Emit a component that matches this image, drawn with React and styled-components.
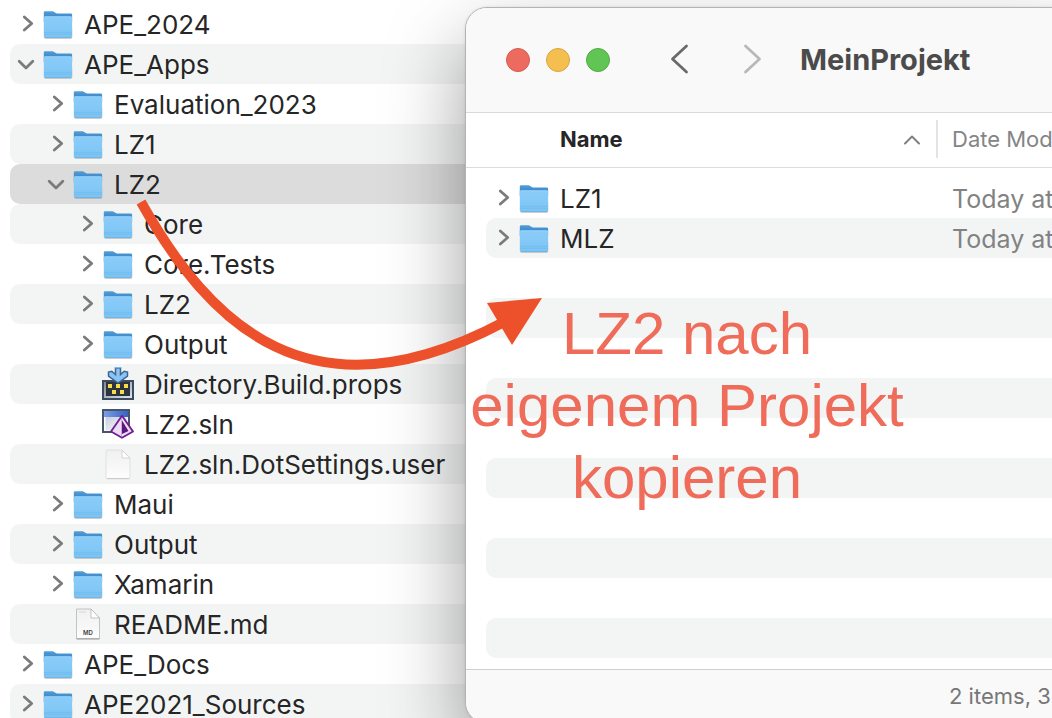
import React from "react";
import styled, { createGlobalStyle } from "styled-components";

const GlobalStyle = createGlobalStyle`
  * { box-sizing: border-box; }
  body {
    margin: 0;
    background: #ffffff;
    color: #262626;
    font-family: Inter, "Liberation Sans", sans-serif;
  }
`;

const Desktop = styled.main`
  position: relative;
  height: 100vh;
  overflow: hidden;
`;

const Tree = styled.ul`
  margin: 0;
  padding: 4px 0 0 10px;
  list-style: none;
`;

const Row = styled.li`
  display: flex;
  align-items: center;
  height: 40px;
  padding-left: ${(p) => 4 + p.$depth * 30}px;
  border-radius: 10px;
  background: ${(p) => (p.$selected ? "#dcdcdc" : p.$striped ? "#f3f5f5" : "transparent")};
`;

const Toggle = styled.button`
  display: flex;
  justify-content: center;
  flex: none;
  width: 28px;
  padding: 0;
  border: 0;
  background: none;
  color: #7b7b7b;
`;

const ToggleSpace = styled.span`
  flex: none;
  width: 28px;
`;

const FileName = styled.span`
  padding: 2px 0 0 10px;
  font-size: 26px;
  font-weight: 400;
  line-height: 30px;
  white-space: nowrap;
`;

const Icon = styled.svg`
  display: block;
  flex: none;
  overflow: visible;
`;

const Window = styled.section`
  position: absolute;
  top: 7px;
  left: 465px;
  right: -40px;
  border: 1px solid #b4b4b4;
  border-radius: 22px;
  background: #ffffff;
  box-shadow: 0 36px 80px rgba(0, 0, 0, 0.38), 0 0 3px rgba(0, 0, 0, 0.1);
`;

const TitleBar = styled.header`
  display: flex;
  align-items: center;
  height: 105px;
  padding-left: 40px;
  border-bottom: 1px solid #d9d9d9;
  border-radius: 21px 21px 0 0;
  background: #f9f9f9;
`;

const Lights = styled.div`
  display: flex;
  gap: 16px;
`;

const Light = styled.button`
  width: 24px;
  height: 24px;
  padding: 0;
  border: 1px solid ${(p) => p.$edge};
  border-radius: 50%;
  background: ${(p) => p.$fill};
`;

const Navigation = styled.nav`
  display: flex;
  gap: 40px;
  padding: 0 30px 2px 56px;
`;

const NavButton = styled.button`
  display: flex;
  padding: 0;
  border: 0;
  background: none;
  color: ${(p) => (p.disabled ? "#b8b8b8" : "#6a6a6a")};
`;

const Title = styled.h1`
  margin: 0;
  color: #4b4b4b;
  font-size: 29px;
  font-weight: 700;
  line-height: 36px;
`;

const FileTable = styled.table`
  display: block;
`;

const TableHead = styled.thead`
  display: block;
  border-bottom: 1px solid #dcdcdc;
`;

const TableBody = styled.tbody`
  display: block;
  padding: 10px 0 11px;
`;

const TableRow = styled.tr`
  display: flex;
  align-items: center;
  height: ${(p) => (p.$head ? 54 : 40)}px;
  margin-left: 20px;
  padding-bottom: ${(p) => (p.$head ? 2 : 0)}px;
  border-radius: 10px;
  background: ${(p) => (p.$striped ? "#f3f5f5" : "transparent")};
`;

const NameHeading = styled.th`
  display: flex;
  align-items: center;
  justify-content: space-between;
  flex: none;
  width: 452px;
  height: 38px;
  padding: 0 16px 0 74px;
  border-right: 2px solid #e3e3e3;
  font-size: 22px;
  font-weight: 700;
  line-height: 28px;
`;

const DateHeading = styled.th`
  padding: 0 0 0 14px;
  color: #858585;
  font-size: 22px;
  font-weight: 400;
  line-height: 28px;
  white-space: nowrap;
`;

const NameCell = styled.td`
  display: flex;
  align-items: center;
  flex: none;
  width: 452px;
  padding: 0 0 0 4px;
`;

const DateCell = styled.td`
  padding: 2px 0 0 14px;
  color: #828282;
  font-size: 25px;
  line-height: 30px;
  white-space: nowrap;
`;

const StatusBar = styled.footer`
  height: 54px;
  padding: 12px 0 0 483px;
  border-top: 1px solid #cfcfcf;
  border-radius: 0 0 21px 21px;
  background: #f9f9f9;
  color: #777777;
  font-size: 22px;
  line-height: 28px;
  white-space: nowrap;
`;

const Arrow = styled.svg`
  position: absolute;
  top: 190px;
  left: 130px;
`;

const Note = styled.p`
  position: absolute;
  top: 298px;
  left: 464px;
  width: 446px;
  margin: 0;
  color: #ef6c5a;
  font-family: "Liberation Sans", Arial, sans-serif;
  font-size: 60px;
  line-height: 72px;
  text-align: center;
`;

function Disclosure({ name, open }) {
  return (
    <Toggle type="button" aria-label={name} aria-expanded={!!open}>
      <Icon width="24" height="24" viewBox="0 0 24 24" fill="none" stroke="currentColor" strokeWidth="2.8" strokeLinecap="round" strokeLinejoin="round">
        <path d={open ? "M3.2 9.300 10 16 16.800 9.300" : "M8.300 5 15.700 11.500 8.300 18"} />
      </Icon>
    </Toggle>
  );
}

function FolderIcon() {
  return (
    <Icon width="32" height="32" viewBox="0 0 32 32" aria-hidden="true">
      <defs>
        <linearGradient id="folderBack" x1="0" y1="0" x2="0" y2="1">
          <stop offset="0" stopColor="#559fd6" />
          <stop offset="0.45" stopColor="#3f8ccd" />
          <stop offset="0.6" stopColor="#2e79c6" />
          <stop offset="1" stopColor="#2e79c6" />
        </linearGradient>
        <linearGradient id="folderFront" x1="0" y1="0" x2="0" y2="1">
          <stop offset="0" stopColor="#8bccf8" />
          <stop offset="1" stopColor="#7cc5f5" />
        </linearGradient>
      </defs>
      <path d="M2.200 20v9.300a1.400 1.400 0 0 0 1.400 1.400h25.200a1.400 1.400 0 0 0 1.400-1.400V20z" fill="#7d8891" opacity=".55" />
      <path d="M1.800 4.500a1.300 1.300 0 0 1 1.300-1.300h7.200c.8 0 1.300.2 1.900.700l1.200.9c.5.400 1 .6 1.700.6h13.700a1.300 1.300 0 0 1 1.300 1.300V14H1.800z" fill="url(#folderBack)" />
      <rect x="1.800" y="8.300" width="28.300" height="21.400" rx="1.300" fill="url(#folderFront)" />
      <path d="M2.800 8.900h26.300" stroke="#9ad5fb" strokeWidth=".7" />
      <path d="M2 24.400h28M2 26.300h28" stroke="#6ab6e9" strokeWidth=".6" />
      <path d="M2.800 29.400h26.300" stroke="#5ea9dd" strokeWidth=".6" />
    </Icon>
  );
}

function BuildIcon() {
  return (
    <Icon width="32" height="32" viewBox="0 0 32 32" aria-hidden="true">
      <defs>
        <linearGradient id="buildFrame" x1="0" y1="0" x2="1" y2="1">
          <stop offset="0" stopColor="#7d8894" />
          <stop offset="1" stopColor="#e0e6ee" />
        </linearGradient>
      </defs>
      <rect x="0" y="12" width="32" height="20" fill="#3b4c60" />
      <rect x="2" y="14" width="28" height="16" fill="url(#buildFrame)" />
      <rect x="4" y="14" width="24" height="14" fill="#2d3440" />
      <path d="M6 16h4v4H6zM14 16h4v4h-4zM22 16h4v4h-4zM10 22h4v4h-4zM18 22h4v4h-4z" fill="#f6dc4b" />
      <path d="M13.500 0v6.500L9.800 3.200 6.500 4v4.200L16 15l9.500-6.800V4l-3.300-.8-3.700 3.300V0z" fill="#86c5f6" stroke="#41658f" strokeWidth="1.500" />
      <path d="M12.600-.8h6.800v1h-6.800z" fill="#86c5f6" />
    </Icon>
  );
}

function SolutionIcon() {
  return (
    <Icon width="32" height="32" viewBox="0 0 32 32" aria-hidden="true">
      <defs>
        <linearGradient id="solutionBar" x1="0" y1="0" x2="1" y2="0">
          <stop offset="0" stopColor="#7b9de4" />
          <stop offset="1" stopColor="#3564c4" />
        </linearGradient>
        <linearGradient id="solutionPane" x1="0" y1="0" x2="1" y2="1">
          <stop offset="0" stopColor="#c6cede" />
          <stop offset="1" stopColor="#ffffff" />
        </linearGradient>
      </defs>
      <rect x="1" y="2" width="26" height="22" fill="#ffffff" stroke="#46556c" strokeWidth="2" />
      <rect x="3.500" y="9" width="22" height="13.500" fill="url(#solutionPane)" />
      <rect x="2" y="3" width="24" height="6" fill="url(#solutionBar)" />
      <path d="M20 7.800 31 23.500 20 29.800 9 23.500z" fill="#eddcf6" stroke="#71218f" strokeWidth="1.900" strokeLinejoin="round" />
      <path d="M20 12.500v13.500l6.500-3z" fill="#5a1878" />
      <path d="M19.500 10v18.500" stroke="#c39ad5" strokeWidth=".8" />
    </Icon>
  );
}

function DocumentIcon({ label }) {
  return (
    <Icon width="32" height="32" viewBox="0 0 32 32" aria-hidden="true">
      <defs>
        <linearGradient id="paper" x1="0" y1="0" x2="0" y2="1">
          <stop offset="0" stopColor="#f0f0f0" />
          <stop offset="1" stopColor="#fdfdfd" />
        </linearGradient>
      </defs>
      {label ? (
        <g>
          <path d="M4.500 1h14.500l8.500 9v20.500h-23z" fill="url(#paper)" stroke="#bcbcbc" strokeWidth=".9" />
          <path d="M4.500 31h23" stroke="#999999" strokeWidth="1" />
          <path d="M19 1v9h8.500z" fill="#ffffff" stroke="#b4b4b4" strokeWidth=".8" />
          <path d="M7 4h7" stroke="#d3d3d3" strokeWidth=".8" />
          <text x="16" y="26.500" textAnchor="middle" fontSize="6" fontWeight="600" fill="#3f3f3f">{label}</text>
        </g>
      ) : (
        <g>
          <path d="M5 2h15l8 8v19a1.500 1.500 0 0 1-1.500 1.500h-21A1.500 1.500 0 0 1 4 29V3.500A1.500 1.500 0 0 1 5 2z" fill="url(#paper)" stroke="#dadada" strokeWidth=".8" />
          <path d="M4.800 30.700h22.500" stroke="#c4c4c4" strokeWidth=".9" />
          <path d="M20 2.300V10h8z" fill="#ffffff" stroke="#cccccc" strokeWidth=".8" />
        </g>
      )}
    </Icon>
  );
}

const icons = {
  folder: <FolderIcon />,
  build: <BuildIcon />,
  solution: <SolutionIcon />,
  document: <DocumentIcon />,
  markdown: <DocumentIcon label="MD" />,
};

const entries = [
  { name: "APE_2024", depth: 0 },
  { name: "APE_Apps", depth: 0, open: true },
  { name: "Evaluation_2023", depth: 1 },
  { name: "LZ1", depth: 1 },
  { name: "LZ2", depth: 1, open: true, selected: true },
  { name: "Core", depth: 2 },
  { name: "Core.Tests", depth: 2 },
  { name: "LZ2", depth: 2 },
  { name: "Output", depth: 2 },
  { name: "Directory.Build.props", depth: 2, kind: "build" },
  { name: "LZ2.sln", depth: 2, kind: "solution" },
  { name: "LZ2.sln.DotSettings.user", depth: 2, kind: "document" },
  { name: "Maui", depth: 1 },
  { name: "Output", depth: 1 },
  { name: "Xamarin", depth: 1 },
  { name: "README.md", depth: 1, kind: "markdown" },
  { name: "APE_Docs", depth: 0 },
  { name: "APE2021_Sources", depth: 0 },
];

const projectFiles = ["LZ1", "MLZ"];
const visibleRows = Array.from({ length: 12 }, (_, i) => projectFiles[i]);

function Entry({ name, kind = "folder", open }) {
  return (
    <>
      {kind === "folder" ? <Disclosure name={name} open={open} /> : <ToggleSpace />}
      {icons[kind]}
      <FileName>{name}</FileName>
    </>
  );
}

export default function App() {
  return (
    <Desktop>
      <GlobalStyle />
      <Tree>
        {entries.map((e, i) => (
          <Row key={i} $depth={e.depth} $striped={i % 2 === 1} $selected={e.selected}>
            <Entry name={e.name} kind={e.kind} open={e.open} />
          </Row>
        ))}
      </Tree>

      <Window>
        <TitleBar>
          <Lights>
            <Light type="button" aria-label="Close" $fill="#ed6a5e" $edge="#d85a50" />
            <Light type="button" aria-label="Minimize" $fill="#f5bf4f" $edge="#d8a441" />
            <Light type="button" aria-label="Zoom" $fill="#61c554" $edge="#52a945" />
          </Lights>
          <Navigation>
            <NavButton type="button" aria-label="Back">
              <Icon width="32" height="32" viewBox="0 0 32 32" fill="none" stroke="currentColor" strokeWidth="2.800" strokeLinecap="round" strokeLinejoin="round">
                <path d="M20.500 3 6.500 16 20.500 29" />
              </Icon>
            </NavButton>
            <NavButton type="button" aria-label="Forward" disabled>
              <Icon width="32" height="32" viewBox="0 0 32 32" fill="none" stroke="currentColor" strokeWidth="2.800" strokeLinecap="round" strokeLinejoin="round">
                <path d="M7.500 3 21.500 16 7.500 29" />
              </Icon>
            </NavButton>
          </Navigation>
          <Title>MeinProjekt</Title>
        </TitleBar>
        <FileTable>
          <TableHead>
            <TableRow $head>
              <NameHeading scope="col">
                Name
                <Icon width="16" height="16" viewBox="0 0 16 16" fill="none" stroke="#808080" strokeWidth="2" strokeLinecap="round" strokeLinejoin="round" aria-hidden="true">
                  <path d="M1 12.500 8 5.500 15 12.500" />
                </Icon>
              </NameHeading>
              <DateHeading scope="col">Date Mod</DateHeading>
            </TableRow>
          </TableHead>
          <TableBody>
            {visibleRows.map((name, i) => (
              <TableRow key={i} $striped={i % 2 === 1}>
                {name && (
                  <>
                    <NameCell>
                      <Entry name={name} />
                    </NameCell>
                    <DateCell>Today at</DateCell>
                  </>
                )}
              </TableRow>
            ))}
          </TableBody>
        </FileTable>
        <StatusBar>2 items, 3</StatusBar>
      </Window>

      <Arrow width="420" height="190" viewBox="130 190 420 190" aria-hidden="true">
        <path d="M141 202C210 325 310 425 504 322" fill="none" stroke="#ec512c" strokeWidth="10" />
        <path d="M542 298 487 303 512 345z" fill="#ec512c" />
      </Arrow>
      <Note>LZ2 nach eigenem Projekt kopieren</Note>
    </Desktop>
  );
}
